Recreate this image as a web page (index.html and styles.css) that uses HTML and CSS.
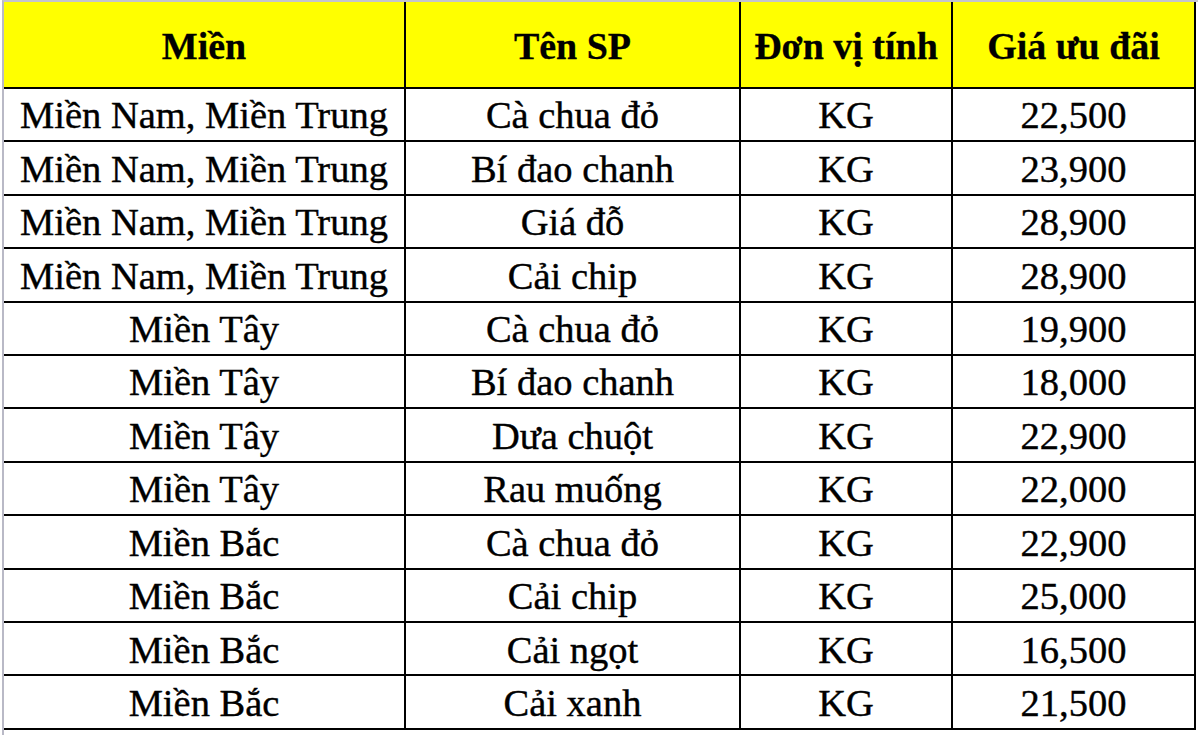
FILE: index.html
```html
<!DOCTYPE html>
<html lang="vi">
<head>
<meta charset="utf-8">
<title>Bảng giá</title>
<link rel="stylesheet" href="styles.css">
</head>
<body>
<div class="frame">
  <div class="sheet">
    <div class="cell head">Miền</div>
    <div class="cell head">Tên SP</div>
    <div class="cell head">Đơn vị tính</div>
    <div class="cell head">Giá ưu đãi</div>

    <div class="cell">Miền Nam, Miền Trung</div><div class="cell">Cà chua đỏ</div><div class="cell">KG</div><div class="cell">22,500</div>
    <div class="cell">Miền Nam, Miền Trung</div><div class="cell">Bí đao chanh</div><div class="cell">KG</div><div class="cell">23,900</div>
    <div class="cell">Miền Nam, Miền Trung</div><div class="cell">Giá đỗ</div><div class="cell">KG</div><div class="cell">28,900</div>
    <div class="cell">Miền Nam, Miền Trung</div><div class="cell">Cải chip</div><div class="cell">KG</div><div class="cell">28,900</div>
    <div class="cell">Miền Tây</div><div class="cell">Cà chua đỏ</div><div class="cell">KG</div><div class="cell">19,900</div>
    <div class="cell">Miền Tây</div><div class="cell">Bí đao chanh</div><div class="cell">KG</div><div class="cell">18,000</div>
    <div class="cell">Miền Tây</div><div class="cell">Dưa chuột</div><div class="cell">KG</div><div class="cell">22,900</div>
    <div class="cell">Miền Tây</div><div class="cell">Rau muống</div><div class="cell">KG</div><div class="cell">22,000</div>
    <div class="cell">Miền Bắc</div><div class="cell">Cà chua đỏ</div><div class="cell">KG</div><div class="cell">22,900</div>
    <div class="cell">Miền Bắc</div><div class="cell">Cải chip</div><div class="cell">KG</div><div class="cell">25,000</div>
    <div class="cell">Miền Bắc</div><div class="cell">Cải ngọt</div><div class="cell">KG</div><div class="cell">16,500</div>
    <div class="cell">Miền Bắc</div><div class="cell">Cải xanh</div><div class="cell">KG</div><div class="cell">21,500</div>
  </div>
</div>
</body>
</html>
```

FILE: styles.css
```css
html, body {
  margin: 0;
  padding: 0;
  background: #ffffff;
}

body {
  width: 1200px;
  height: 735px;
  overflow: hidden;
  font-family: "Liberation Serif", "Times New Roman", serif;
  color: #000;
}

.frame {
  margin-left: 2px;
  border-left: 2px solid #b9b9c6;
  border-top: 2px solid #c4c4cc;
  width: 1194px;
  height: 733px;
}

.sheet {
  display: grid;
  grid-template-columns: 402px 335px 212px 243px;
  grid-template-rows: 87px repeat(12, 53.42px);
}

.cell {
  box-sizing: border-box;
  border-right: 2px solid #000;
  border-bottom: 2px solid #000;
  display: flex;
  align-items: center;
  justify-content: center;
  font-size: 38.5px;
  line-height: 1;
  white-space: nowrap;
  padding-top: 2px;
  -webkit-text-stroke: 0.4px #000;
}

.head {
  background: #ffff00;
  font-weight: bold;
  font-size: 38px;
  -webkit-text-stroke: 0.3px #000;
}
```
